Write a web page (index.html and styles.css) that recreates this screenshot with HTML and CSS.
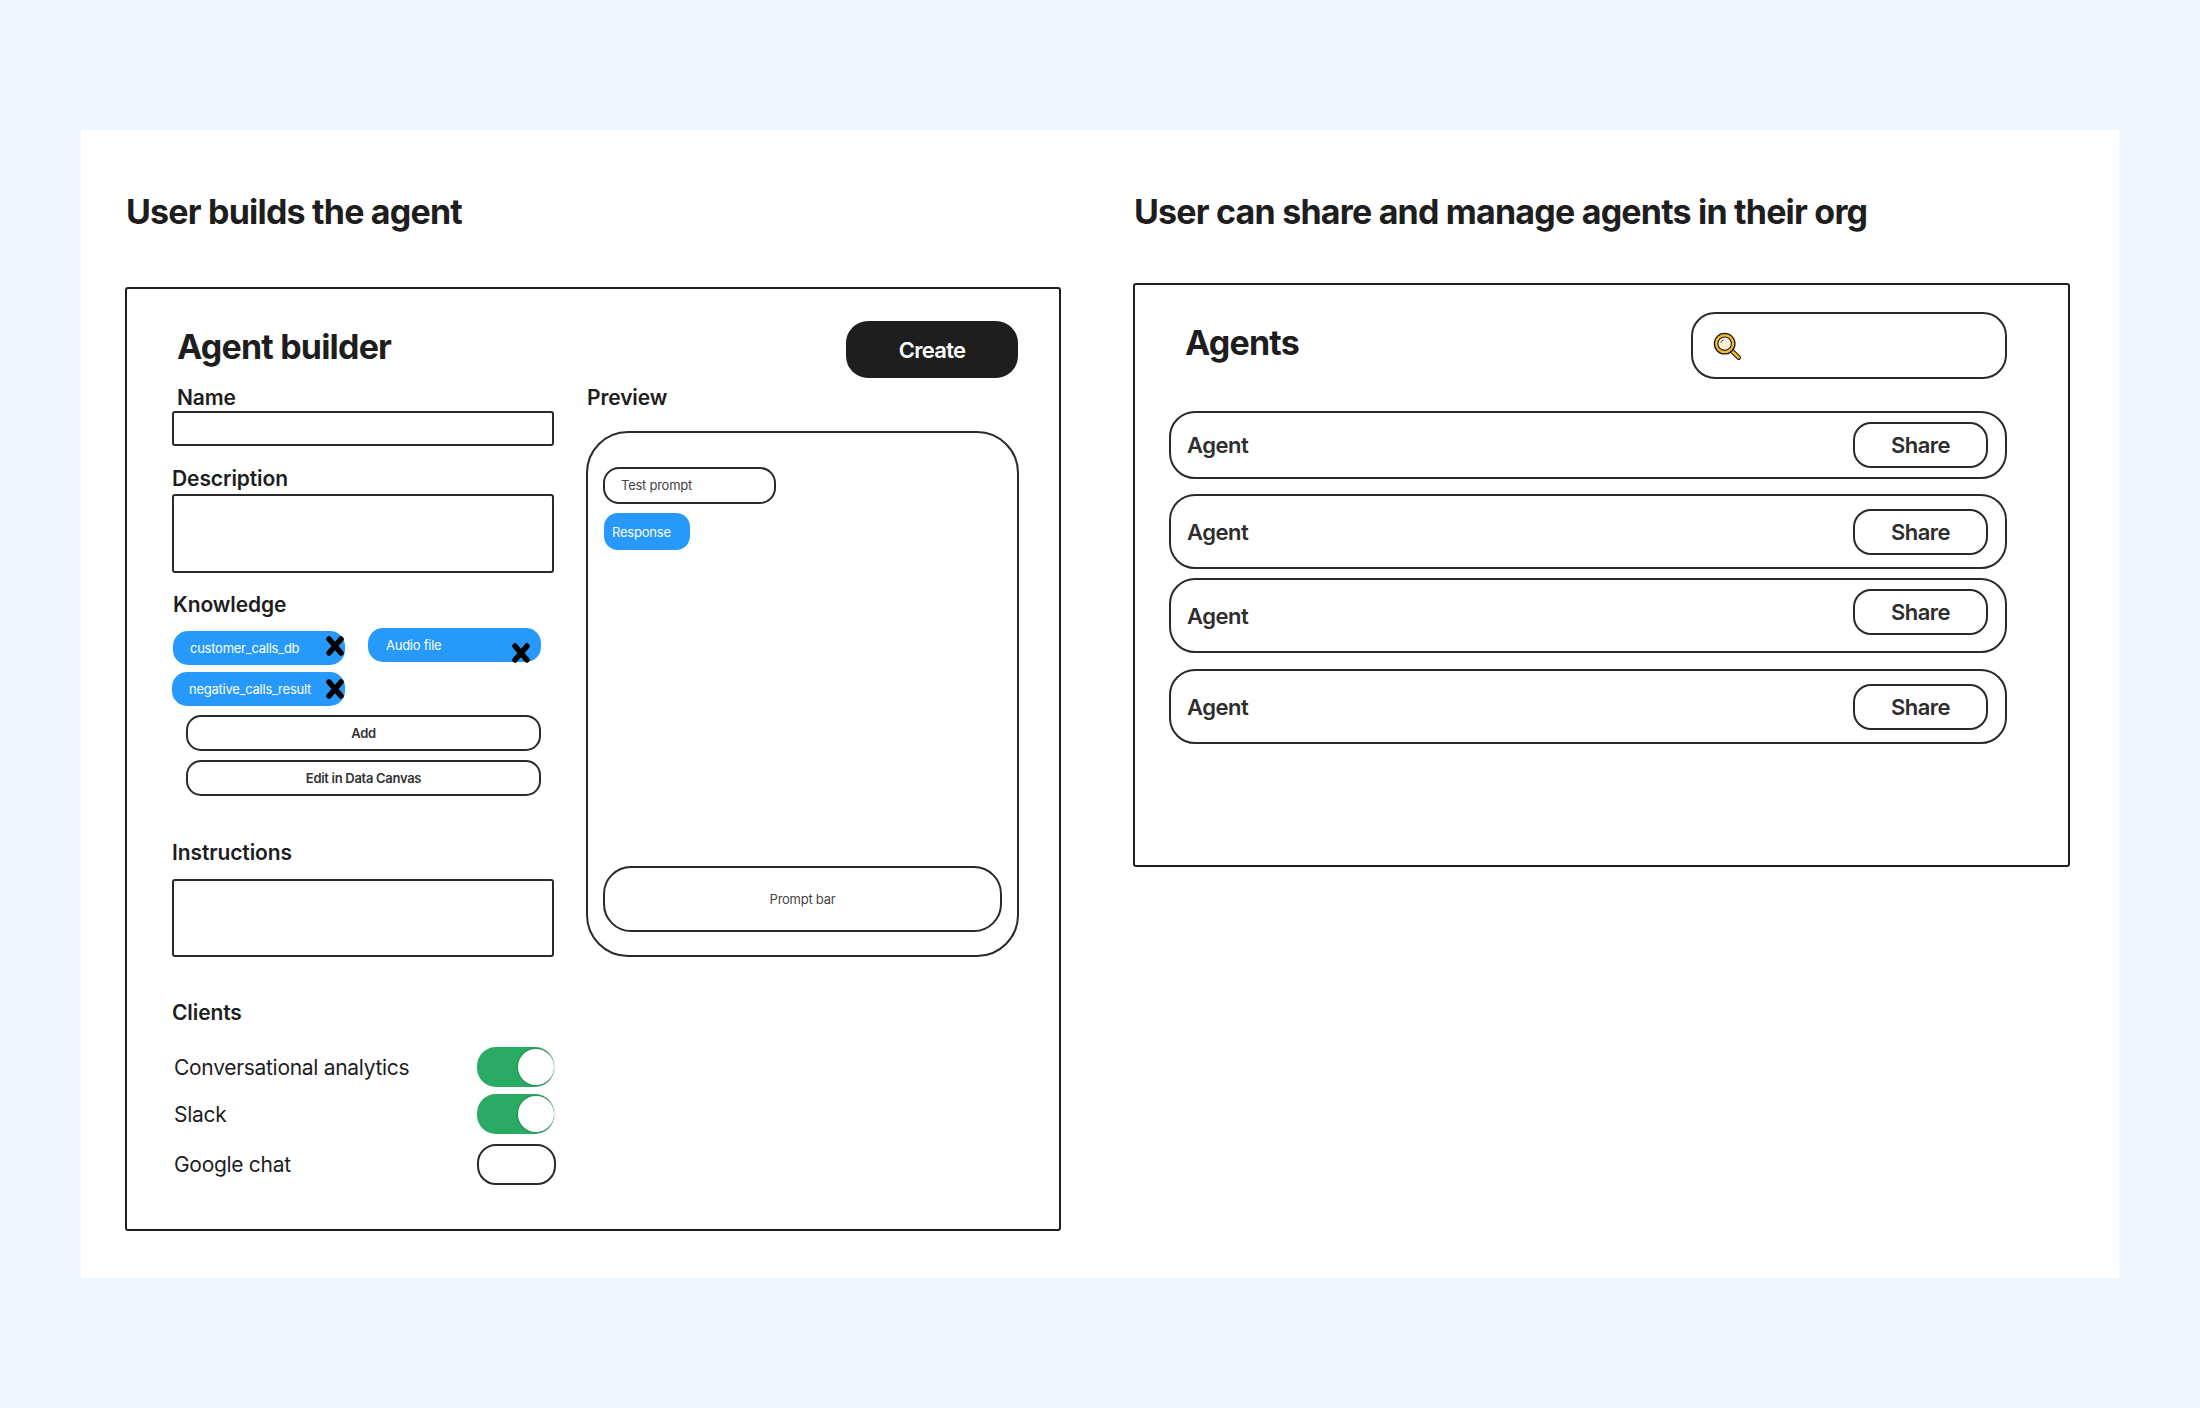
FILE: index.html
```html
<!DOCTYPE html>
<html lang="en">
<head>
  <meta charset="UTF-8">
  <title>Agent builder wireframes</title>
  <link rel="stylesheet" href="styles.css">
</head>
<body>

  <div class="board">
    <section class="col">
      <h1>User builds the agent</h1>
      <div class="frame builder">
        <div class="builder-head">
          <h2>Agent builder</h2>
          <div class="create">Create</div>
        </div>
        <div class="builder-body">
          <div class="form">
            <div class="label name-label">Name</div>
            <div class="box name-box"></div>
            <div class="label desc-label">Description</div>
            <div class="box tall-box"></div>
            <div class="label know-label">Knowledge</div>
            <div class="chips">
              <div class="chip chip-low">customer_calls_db
                <svg class="x" viewBox="0 0 18 20"><path d="M3 3l12 14M15 3L3 17"/></svg>
              </div>
              <div class="chip chip-gap">Audio file
                <svg class="x x-low" viewBox="0 0 18 20"><path d="M3 3l12 14M15 3L3 17"/></svg>
              </div>
              <div class="chip chip-wide">negative_calls_result
                <svg class="x" viewBox="0 0 18 20"><path d="M3 3l12 14M15 3L3 17"/></svg>
              </div>
            </div>
            <div class="pill-btn">Add</div>
            <div class="pill-btn">Edit in Data Canvas</div>
            <div class="label instr-label">Instructions</div>
            <div class="box tall-box instr-box"></div>
            <div class="label clients-label">Clients</div>
            <div class="client first">
              <span>Conversational analytics</span>
              <div class="toggle on"><div class="knob"></div></div>
            </div>
            <div class="client second">
              <span>Slack</span>
              <div class="toggle on"><div class="knob"></div></div>
            </div>
            <div class="client third">
              <span>Google chat</span>
              <div class="toggle off"></div>
            </div>
          </div>
          <div class="preview">
            <div class="label name-label">Preview</div>
            <div class="phone">
              <div class="test-prompt">Test prompt</div>
              <div class="response">Response</div>
              <div class="prompt-bar">Prompt bar</div>
            </div>
          </div>
        </div>
      </div>
    </section>

    <section class="col col-right">
      <h1>User can share and manage agents in their org</h1>
      <div class="frame agents">
        <div class="agents-head">
          <h2>Agents</h2>
          <div class="search">
            <svg class="search-icon" viewBox="0 0 30 30">
              <path d="M19 19l8.500 8.500" stroke="#1e1e1e" stroke-width="5" stroke-linecap="round"/>
              <path d="M19 19l8.500 8.500" stroke="#f4b731" stroke-width="2.8" stroke-linecap="round"/>
              <circle cx="12.5" cy="12.5" r="11" fill="#f4b731" stroke="#1e1e1e" stroke-width="1.400"/>
              <circle cx="12.5" cy="12.5" r="7.200" fill="#fdf1d8" stroke="#1e1e1e" stroke-width="1.200"/>
              <path d="M8.500 11.500c.4-1.600 1.400-2.600 3-3" fill="none" stroke="#1e1e1e" stroke-width="1"/>
            </svg>
          </div>
        </div>
        <div class="row row-first">
          <span>Agent</span>
          <div class="share">Share</div>
        </div>
        <div class="row row-tall row-second">
          <span>Agent</span>
          <div class="share">Share</div>
        </div>
        <div class="row row-tall row-third">
          <span>Agent</span>
          <div class="share share-up">Share</div>
        </div>
        <div class="row row-tall row-fourth">
          <span>Agent</span>
          <div class="share">Share</div>
        </div>
      </div>
    </section>
  </div>

</body>
</html>
```

FILE: styles.css
```css
* {
  box-sizing: border-box;
}

html, body {
  margin: 0;
  height: 1408px;
  overflow: hidden;
}

body {
  background: #eff6fe;
  padding: 130px 81px 0 81px;
  font-family: Inter, 'Liberation Sans', sans-serif;
  color: #1e1e1e;
}

h1, h2 {
  margin: 0;
  font-weight: 700;
  font-size: 34px;
  line-height: 40px;
  letter-spacing: -0.8px;
}

h1 {
  padding-left: 1px;
}

.board {
  display: flex;
  gap: 72px;
  background: #fff;
  padding: 62px 0 44px 44px;
  height: 1148px;
}

.col {
  width: 936px;
}

.col-right {
  width: 937px;
}

.frame {
  border: 2px solid #1e1e1e;
  border-radius: 3px;
}

/* left wireframe */
.builder {
  margin-top: 55px;
  padding: 32px 40px 44px 45px;
}

.builder-head {
  display: flex;
  justify-content: space-between;
  height: 57px;
}

.builder-head h2 {
  padding: 6px 0 0 5px;
}

.create {
  width: 172px;
  height: 57px;
  margin-right: 1px;
  border-radius: 22px;
  background: #1e1e1e;
  color: #fff;
  font-size: 22px;
  font-weight: 600;
  letter-spacing: -0.7px;
  display: flex;
  align-items: center;
  justify-content: center;
}

.builder-body {
  display: flex;
  gap: 32px;
}

.form {
  width: 382px;
}

.label {
  font-size: 21px;
  font-weight: 600;
  line-height: 24px;
  letter-spacing: -0.1px;
}

.name-label {
  margin-top: 8px;
  padding-left: 5px;
}

.box {
  border: 2px solid #2a2a2a;
  border-radius: 3px;
}

.name-box {
  height: 35px;
  margin-top: 1px;
}

.desc-label {
  margin-top: 21px;
}

.tall-box {
  height: 79px;
  margin-top: 3px;
}

.know-label {
  margin-top: 20px;
  padding-left: 1px;
}

.chips {
  display: flex;
  flex-wrap: wrap;
  align-items: flex-start;
  row-gap: 7px;
  margin-top: 11px;
}

.chip {
  position: relative;
  width: 172px;
  height: 34px;
  border-radius: 15px;
  background: #2699fb;
  color: #fff;
  font-size: 13px;
  letter-spacing: -0.25px;
  line-height: 34px;
  padding-left: 17px;
}

.chip-low {
  margin: 3px 0 0 1px;
}

.chip-gap {
  width: 173px;
  margin-left: 23px;
  line-height: 35px;
  padding-left: 18px;
}

.chip-wide {
  width: 173px;
}

.x {
  position: absolute;
  right: 1px;
  top: 5px;
  width: 18px;
  height: 20px;
}

.chip-wide .x {
  top: 7px;
}

.x path {
  fill: none;
  stroke: #000;
  stroke-width: 5.5;
  stroke-linecap: round;
}

.chip .x-low {
  top: 15px;
  right: 11px;
}

.pill-btn {
  width: 355px;
  height: 36px;
  margin: 9px 0 0 14px;
  border: 2px solid #2a2a2a;
  border-radius: 15px;
  font-size: 13px;
  font-weight: 600;
  letter-spacing: -0.3px;
  color: #333;
  display: flex;
  align-items: center;
  justify-content: center;
}

.instr-label {
  margin-top: 45px;
}

.instr-box {
  height: 78px;
  margin-top: 14px;
}

.clients-label {
  margin-top: 44px;
}

.client {
  width: 384px;
  display: flex;
  justify-content: space-between;
  align-items: center;
  padding-left: 2px;
  font-size: 21px;
  letter-spacing: -0.3px;
}

.client.first {
  margin-top: 22px;
}

.client.second {
  margin-top: 7px;
}

.client.third {
  margin-top: 10px;
}

.toggle {
  border-radius: 19px;
}

.toggle.on {
  width: 77px;
  height: 40px;
  margin-right: 2px;
  background: #2aab63;
  display: flex;
  justify-content: flex-end;
  align-items: center;
}

.toggle.off {
  width: 79px;
  height: 41px;
  border: 2px solid #2a2a2a;
}

.knob {
  width: 36px;
  height: 36px;
  border-radius: 50%;
  background: #fff;
  box-shadow: 0 0 3px rgba(0, 0, 0, 0.3);
}

.preview {
  width: 433px;
}

.preview .label {
  padding-left: 1px;
}

.phone {
  height: 526px;
  margin-top: 21px;
  border: 2px solid #2a2a2a;
  border-radius: 42px;
  padding: 34px 15px 23px;
  display: flex;
  flex-direction: column;
  align-items: flex-start;
}

.test-prompt {
  width: 173px;
  height: 37px;
  border: 2px solid #2a2a2a;
  border-radius: 16px;
  padding-left: 16px;
  font-size: 13px;
  letter-spacing: -0.25px;
  line-height: 33px;
  color: #444;
}

.response {
  width: 86px;
  height: 37px;
  margin: 9px 0 0 1px;
  border-radius: 14px;
  background: #2699fb;
  color: #fff;
  padding-left: 8px;
  font-size: 13px;
  letter-spacing: -0.2px;
  line-height: 38px;
}

.prompt-bar {
  width: 100%;
  height: 66px;
  margin-top: auto;
  border: 2px solid #2a2a2a;
  border-radius: 28px;
  font-size: 13px;
  letter-spacing: -0.25px;
  color: #444;
  display: flex;
  align-items: center;
  justify-content: center;
}

/* right wireframe */
.agents {
  height: 584px;
  margin-top: 51px;
  padding: 27px 61px 0 34px;
}

.agents-head {
  display: flex;
  justify-content: space-between;
  align-items: flex-start;
  margin-bottom: 32px;
}

.agents-head h2 {
  margin-top: 11px;
  padding-left: 16px;
}

.search {
  width: 316px;
  height: 67px;
  border: 2px solid #2a2a2a;
  border-radius: 24px;
  padding: 18px 0 0 20px;
}

.search-icon {
  display: block;
  width: 28px;
  height: 28px;
}

.row {
  height: 68px;
  border: 2px solid #2a2a2a;
  border-radius: 26px;
  padding: 0 17px 0 16px;
  display: flex;
  justify-content: space-between;
  align-items: center;
  font-size: 22px;
  font-weight: 600;
  letter-spacing: -0.5px;
  color: #2e2e2e;
}

.row-tall {
  height: 75px;
}

.row-second {
  margin-top: 15px;
}

.row-third {
  margin-top: 9px;
}

.row-fourth {
  margin-top: 16px;
}

.share {
  width: 135px;
  height: 46px;
  border: 2px solid #2a2a2a;
  border-radius: 18px;
  display: flex;
  align-items: center;
  justify-content: center;
}

.share-up {
  margin-bottom: 7px;
}
```
